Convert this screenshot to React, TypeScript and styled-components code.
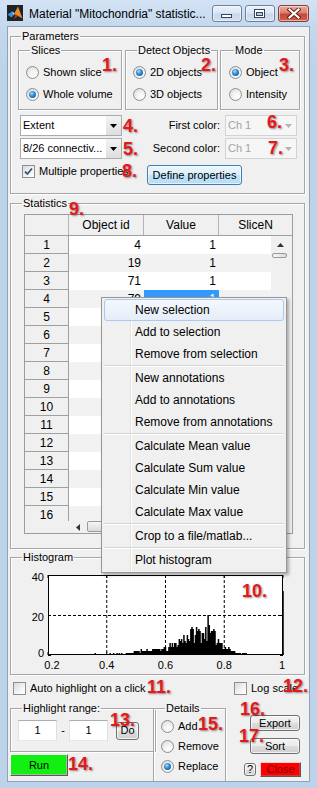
import React from "react";
import styled, { createGlobalStyle, css } from "styled-components";

const FONT = `"Liberation Sans", Arial, sans-serif`;

const GlobalStyle = createGlobalStyle`
  html, body { margin: 0; padding: 0; background: #bcd3ea; }
  *, *::before, *::after { box-sizing: border-box; }
  body { font-family: ${FONT}; font-size: 11px; color: #000; }
`;

/* ---------- window chrome ---------- */

const Win = styled.div`
  position: relative;
  width: 317px;
  height: 788px;
  overflow: hidden;
  display: flex;
  flex-direction: column;
  background: linear-gradient(#d3e3f4 0px, #c4d8ee 26px, #bcd3ea 70px, #bcd3ea 100%);
`;

const TitleBar = styled.header`
  flex: none;
  height: 26px;
  display: flex;
  align-items: flex-start;
  padding: 0 8px 0 7px;
`;

const AppIcon = styled.svg`
  flex: none;
  margin-top: 5px;
`;

const Title = styled.div`
  margin: 6px 0 0 6px;
  font: 12px/16px ${FONT};
  color: #000;
  white-space: nowrap;
`;

const CaptionGroup = styled.div`
  margin: 5px 0 0 auto;
  display: flex;
  gap: 3px;
`;

const CaptionBtn = styled.div<{ $w: number; $close?: boolean }>`
  width: ${(p) => p.$w}px;
  height: 17px;
  border-radius: 3px;
  display: flex;
  align-items: center;
  justify-content: center;
  border: 1px solid ${(p) => (p.$close ? "#8c3b33" : "#6c80a0")};
  background: ${(p) =>
    p.$close
      ? "linear-gradient(#e9aa9e 0%, #d98272 45%, #c4483a 55%, #d1604d 100%)"
      : "linear-gradient(#e9f0f9 0%, #dce6f3 45%, #c9d8eb 55%, #d3dff0 100%)"};
  box-shadow: inset 0 0 0 1px rgba(255, 255, 255, 0.5);
`;

const Client = styled.main`
  flex: none;
  height: 756px;
  margin: 0 7px;
  padding: 3px 4px 0 2px;
  background: #f0f0f0;
  border: 1px solid #8fa3bd;
  overflow: hidden;
  display: flex;
  flex-direction: column;
`;

/* ---------- panels ---------- */

const Panel = styled.fieldset<{ $p: string; $w: number; $h?: number; $mt?: number; $ml?: number }>`
  flex: none;
  min-width: 0;
  margin: ${(p) => p.$mt ?? 0}px 0 0 ${(p) => p.$ml ?? 0}px;
  padding: ${(p) => p.$p};
  width: ${(p) => p.$w}px;
  ${(p) =>
    p.$h !== undefined &&
    css`
      height: ${p.$h}px;
    `}
  border: 1px solid #a6a6a6;
  box-shadow: inset 1px 1px 0 #fff, 1px 1px 0 #fff;
`;

const Legend = styled.legend<{ $ml: number }>`
  margin-left: ${(p) => p.$ml}px;
  padding: 0 1px;
  height: 13px;
  font: 11px/13px ${FONT};
  white-space: nowrap;
`;

const GroupRow = styled.div`
  display: flex;
  align-items: flex-start;
`;

/* ---------- small controls ---------- */

const ChoiceRow = styled.label<{ $h: number }>`
  display: flex;
  align-items: center;
  gap: 4px;
  height: ${(p) => p.$h}px;
  white-space: nowrap;
  font: 11px/13px ${FONT};
`;

const RadioMark = styled.span<{ $on?: boolean }>`
  position: relative;
  flex: none;
  width: 13px;
  height: 13px;
  border-radius: 50%;
  border: 1px solid #8e8f8f;
  background: radial-gradient(circle at 65% 70%, #ffffff 0%, #f1f1f1 45%, #d2d2d2 100%);
  ${(p) =>
    p.$on &&
    css`
      &::after {
        content: "";
        position: absolute;
        left: 2px;
        top: 2px;
        width: 7px;
        height: 7px;
        border-radius: 50%;
        background: radial-gradient(circle at 40% 35%, #a6dcfc 0%, #2b88d4 45%, #0a4a8c 100%);
      }
    `}
`;

const CheckMark = styled.span`
  flex: none;
  width: 13px;
  height: 13px;
  border: 1px solid #8e8f8f;
  background: linear-gradient(135deg, #d9d9d9 0%, #f4f4f4 60%, #ffffff 100%);
  display: flex;
  align-items: center;
  justify-content: center;
`;

function Radio({ label, on, h = 22 }: { label: string; on?: boolean; h?: number }) {
  return (
    <ChoiceRow $h={h}>
      <RadioMark $on={on} />
      <span>{label}</span>
    </ChoiceRow>
  );
}

function Check({ label, on, h = 14 }: { label: string; on?: boolean; h?: number }) {
  return (
    <ChoiceRow $h={h}>
      <CheckMark>
        {on && (
          <svg width="9" height="9" viewBox="0 0 9 9">
            <path d="M1 4.6 L3.4 7 L8 1.5" fill="none" stroke="#3a5380" strokeWidth="1.8" />
          </svg>
        )}
      </CheckMark>
      <span>{label}</span>
    </ChoiceRow>
  );
}

const Select = styled.div<{ $w: number; $disabled?: boolean }>`
  width: ${(p) => p.$w}px;
  height: 21px;
  display: flex;
  border: 1px solid ${(p) => (p.$disabled ? "#d3d3d3" : "#a9abb0")};
  background: ${(p) => (p.$disabled ? "#f6f6f6" : "#fff")};
  color: ${(p) => (p.$disabled ? "#a3a3a3" : "#000")};
`;

const SelectText = styled.span`
  flex: 1;
  padding-left: 2px;
  display: flex;
  align-items: center;
  white-space: nowrap;
  overflow: hidden;
  font: 11px/13px ${FONT};
`;

const SelectArrow = styled.span<{ $disabled?: boolean }>`
  flex: none;
  width: 15px;
  display: flex;
  align-items: center;
  justify-content: center;
  background: ${(p) => (p.$disabled ? "transparent" : "linear-gradient(#f3f3f3, #dedede)")};
`;

function Dropdown({ w, text, disabled }: { w: number; text: string; disabled?: boolean }) {
  return (
    <Select $w={w} $disabled={disabled}>
      <SelectText>{text}</SelectText>
      <SelectArrow $disabled={disabled}>
        <svg width="7" height="4" viewBox="0 0 7 4">
          <path d="M0 0 H7 L3.5 4 Z" fill={disabled ? "#b4b4b4" : "#000"} />
        </svg>
      </SelectArrow>
    </Select>
  );
}

const ControlGrid = styled.div<{ $mt: number }>`
  margin: ${(p) => p.$mt}px 0 0 2px;
  display: grid;
  grid-template-columns: 102px 103px 72px;
  align-items: center;
  height: 21px;
`;

const FieldLabel = styled.span`
  padding-right: 5px;
  text-align: right;
  white-space: nowrap;
  font: 11px/13px ${FONT};
`;

const CheckRow = styled.div`
  margin: 6px 0 0 2px;
  height: 20px;
  display: flex;
  align-items: flex-start;
`;

const CheckSlot = styled.div`
  width: 127px;
  margin-top: -1px;
  padding-left: 2px;
`;

type Tone = "std" | "hot" | "green" | "red";

const Button = styled.div<{ $w: number; $h: number; $tone?: Tone }>`
  flex: none;
  width: ${(p) => p.$w}px;
  height: ${(p) => p.$h}px;
  display: flex;
  align-items: center;
  justify-content: center;
  font: 11px/13px ${FONT};
  white-space: nowrap;
  ${(p) => {
    switch (p.$tone) {
      case "hot":
        return css`
          border: 1px solid #3c7fb1;
          border-radius: 3px;
          background: linear-gradient(#eaf6fd 0%, #d9effc 50%, #c3e4f9 51%, #b5dcf6 100%);
          box-shadow: inset 0 0 0 1px rgba(255, 255, 255, 0.6);
        `;
      case "green":
        return css`
          border: 1px solid;
          border-color: #f4fff4 #5a5a5a #5a5a5a #f4fff4;
          background: #12f012;
          box-shadow: inset -1px -1px 0 #9cbf9c;
        `;
      case "red":
        return css`
          border: 1px solid;
          border-color: #ffd0d0 #5a5a5a #5a5a5a #ffd0d0;
          background: #ff0000;
          color: #7a0000;
          box-shadow: inset -1px -1px 0 #c04040;
        `;
      default:
        return css`
          border: 1px solid #707070;
          border-radius: 3px;
          background: linear-gradient(#f3f3f3 0%, #ebebeb 50%, #dddddd 51%, #cfcfcf 100%);
          box-shadow: inset 0 0 0 1px rgba(255, 255, 255, 0.7);
        `;
    }
  }}
`;

/* ---------- table ---------- */

const TableBox = styled.div`
  width: 269px;
  height: 320px;
  border: 1px solid #9c9c9c;
  background: #f0f0f0;
  display: grid;
  grid-template-columns: 44px 202px 21px;
  grid-template-rows: 21px 285px 12px;
  overflow: hidden;
  font: 12px/14px ${FONT};
`;

const HeadRow = styled.div`
  grid-column: 1 / -1;
  display: flex;
  border-bottom: 1px solid #a0a0a0;
  background: #f0f0f0;
`;

const HeadCell = styled.div<{ $w: number; $last?: boolean }>`
  flex: none;
  width: ${(p) => p.$w}px;
  display: flex;
  align-items: center;
  justify-content: center;
  border-right: ${(p) => (p.$last ? "none" : "1px solid #b4b4b4")};
  white-space: nowrap;
`;

const RowHeads = styled.div`
  grid-column: 1;
  grid-row: 2;
  overflow: hidden;
`;

const RowHead = styled.div`
  height: 18px;
  display: flex;
  align-items: center;
  justify-content: center;
  border-right: 1px solid #a0a0a0;
  border-bottom: 1px solid #a0a0a0;
`;

const DataView = styled.div`
  grid-column: 2;
  grid-row: 2;
  overflow: hidden;
  background: #fff;
`;

const DataRow = styled.div<{ $alt: boolean }>`
  display: flex;
  height: 18px;
  background: ${(p) => (p.$alt ? "#f2f2f2" : "#fff")};
`;

const DataCell = styled.div<{ $sel?: boolean }>`
  flex: none;
  width: 75px;
  padding-right: 3px;
  display: flex;
  align-items: center;
  justify-content: flex-end;
  ${(p) =>
    p.$sel &&
    css`
      background: #3399ff;
      color: #fff;
    `}
`;

const VScroll = styled.div`
  grid-column: 3;
  grid-row: 2;
  display: flex;
  flex-direction: column;
  background: #f0f0f0;
`;

const HScroll = styled.div`
  grid-column: 2;
  grid-row: 3;
  display: flex;
  align-items: flex-start;
  background: #f0f0f0;
`;

const ScrollArrow = styled.div<{ $w: number; $h: number }>`
  flex: none;
  width: ${(p) => p.$w}px;
  height: ${(p) => p.$h}px;
  display: flex;
  align-items: center;
  justify-content: center;
`;

const Thumb = styled.div<{ $w: number; $h: number; $vertical?: boolean }>`
  flex: none;
  margin-left: 1px;
  width: ${(p) => p.$w}px;
  height: ${(p) => p.$h}px;
  border: 1px solid #9a9a9a;
  border-radius: 2px;
  background: ${(p) =>
    p.$vertical ? "linear-gradient(to right, #f6f6f6, #dadada)" : "linear-gradient(#f6f6f6, #dadada)"};
`;

/* ---------- bottom area ---------- */

const OptionsRow = styled.div`
  flex: none;
  margin-top: 6px;
  padding-left: 3px;
  height: 14px;
  display: grid;
  grid-template-columns: 221px auto;
  align-items: center;
`;

const BottomArea = styled.div`
  flex: none;
  margin-top: 7px;
  display: flex;
  align-items: flex-start;
`;

const LeftCol = styled.div`
  flex: none;
  width: 146px;
  display: flex;
  flex-direction: column;
`;

const RangeRow = styled.div`
  display: flex;
  align-items: center;
  height: 21px;
`;

const Edit = styled.div`
  flex: none;
  width: 39px;
  height: 21px;
  background: #fff;
  border: 1px solid #abadb3;
  border-color: #abadb3 #dbdfe6 #e3e9ef #e2e3ea;
  display: flex;
  align-items: center;
  justify-content: center;
  font: 11px/13px ${FONT};
`;

const Dash = styled.span`
  flex: none;
  width: 12px;
  text-align: center;
  font: 11px/13px ${FONT};
`;

const RightCol = styled.div`
  flex: none;
  margin-left: 18px;
  width: 57px;
  display: flex;
  flex-direction: column;
  align-items: flex-start;
`;

const Slot = styled.div<{ $mt: number; $ml: number }>`
  margin: ${(p) => p.$mt}px 0 0 ${(p) => p.$ml}px;
`;

const FooterRow = styled.div`
  margin-top: 8px;
  display: flex;
  align-items: center;
  gap: 4px;
`;

/* ---------- context menu ---------- */

const Menu = styled.nav`
  position: absolute;
  left: 101px;
  top: 297px;
  width: 186px;
  padding: 1px 2px;
  border: 1px solid #979797;
  background: linear-gradient(
      to right,
      transparent 28px,
      #e2e3e3 28px,
      #e2e3e3 29px,
      #ffffff 29px,
      #ffffff 30px,
      transparent 30px
    ),
    #f0f0f0;
  box-shadow: 2px 2px 3px rgba(0, 0, 0, 0.3);
  font: 12px/14px ${FONT};
  z-index: 5;
`;

const MenuItem = styled.div<{ $active?: boolean }>`
  height: 22px;
  display: flex;
  align-items: center;
  padding-left: 30px;
  white-space: nowrap;
  border: 1px solid transparent;
  border-radius: 3px;
  ${(p) =>
    p.$active &&
    css`
      border-color: #a9c9ee;
      background: linear-gradient(#f4f8fd, #e4edf9);
    `}
`;

const MenuSep = styled.div`
  height: 2px;
  border-top: 1px solid #d5d5d5;
  border-bottom: 1px solid #ffffff;
`;

/* ---------- annotations ---------- */

const Note = styled.span<{ $x: number; $y: number }>`
  position: absolute;
  left: ${(p) => p.$x}px;
  top: ${(p) => p.$y}px;
  font: bold 18px/18px ${FONT};
  color: #e3191c;
  text-shadow: 1px 1px 2px rgba(0, 0, 0, 0.45);
  white-space: nowrap;
  pointer-events: none;
  z-index: 6;
`;

/* ---------- histogram ---------- */

function mulberry32(seed: number) {
  let a = seed;
  return function () {
    a |= 0;
    a = (a + 0x6d2b79f5) | 0;
    let t = Math.imul(a ^ (a >>> 15), 1 | a);
    t = (t + Math.imul(t ^ (t >>> 7), 61 | t)) ^ t;
    return ((t ^ (t >>> 14)) >>> 0) / 4294967296;
  };
}

const PLOT = { x0: 37, x1: 272, y0: 11, y1: 91 };
const px = (v: number) => PLOT.x0 + ((v - 0.2) / 0.8) * (PLOT.x1 - PLOT.x0);
const py = (n: number) => PLOT.y1 - (n / 40) * (PLOT.y1 - PLOT.y0);

function buildBars(): string {
  const rnd = mulberry32(11);
  const step = (PLOT.x1 - PLOT.x0) / 0.8 / 255;
  const w = step + 0.35;
  const lonely = [92, 105, 108, 111, 113, 115];
  let d = "";
  for (let i = 52; i <= 255; i++) {
    const c = i / 255;
    const g = (m: number, s: number, a: number) => a * Math.exp(-((c - m) ** 2) / (2 * s * s));
    let v =
      (g(0.74, 0.05, 10.5) + g(0.67, 0.035, 4.5) + g(0.6, 0.04, 2.5) + g(0.52, 0.03, 2)) *
      (0.55 + 0.85 * rnd());
    if (c < 0.45) v = lonely.includes(i) ? 1 : 0;
    else if (c > 0.875) v = 0;
    else if (v < 1 && rnd() > 0.4) v = 1;
    let n = Math.round(v);
    if (i === 190) n = 20;
    if (i === 255) n = 32;
    if (n <= 0) continue;
    const x = px(c) - w / 2;
    d += `M${x.toFixed(2)} ${PLOT.y1}h${w.toFixed(2)}V${py(n).toFixed(2)}h${(-w).toFixed(2)}Z`;
  }
  return d;
}

const BARS = buildBars();

function Histogram() {
  const xt = [0.2, 0.4, 0.6, 0.8, 1];
  const yt = [0, 20, 40];
  return (
    <svg width="292" height="110" viewBox="0 0 292 110" style={{ display: "block" }}>
      <rect x={PLOT.x0} y={PLOT.y0} width={PLOT.x1 - PLOT.x0} height={PLOT.y1 - PLOT.y0} fill="#fff" />
      {[0.4, 0.6, 0.8].map((v) => (
        <line key={v} x1={px(v)} x2={px(v)} y1={PLOT.y0} y2={PLOT.y1} stroke="#000" strokeDasharray="3 2" />
      ))}
      <line x1={PLOT.x0} x2={PLOT.x1} y1={py(20) + 0.5} y2={py(20) + 0.5} stroke="#000" strokeDasharray="3 2" />
      <path d={BARS} fill="#000" />
      <rect
        x={PLOT.x0 + 0.5}
        y={PLOT.y0 + 0.5}
        width={PLOT.x1 - PLOT.x0 - 1}
        height={PLOT.y1 - PLOT.y0 - 1}
        fill="none"
        stroke="#000"
      />
      {xt.map((v) => (
        <g key={v}>
          <line x1={px(v)} x2={px(v)} y1={PLOT.y1} y2={PLOT.y1 - 3} stroke="#000" />
          <line x1={px(v)} x2={px(v)} y1={PLOT.y0} y2={PLOT.y0 + 3} stroke="#000" />
          <text
            x={v === 0.2 ? px(v) + 4 : v === 1 ? px(v) - 1 : px(v)}
            y={105}
            textAnchor="middle"
            fontFamily="Liberation Sans, Arial, sans-serif"
            fontSize="11"
          >
            {v === 1 ? "1" : v.toFixed(1)}
          </text>
        </g>
      ))}
      {yt.map((v) => (
        <g key={v}>
          <line x1={PLOT.x0} x2={PLOT.x0 + 3} y1={py(v) + 0.5} y2={py(v) + 0.5} stroke="#000" />
          <line x1={PLOT.x1 - 3} x2={PLOT.x1} y1={py(v) + 0.5} y2={py(v) + 0.5} stroke="#000" />
          <text
            x={33}
            y={v === 0 ? py(v) + 2 : py(v) + 6}
            textAnchor="end"
            fontFamily="Liberation Sans, Arial, sans-serif"
            fontSize="11"
          >
            {v}
          </text>
        </g>
      ))}
    </svg>
  );
}

/* ---------- data ---------- */

const ROWS: { id: number; value: number }[] = [
  { id: 4, value: 1 },
  { id: 19, value: 1 },
  { id: 71, value: 1 },
  { id: 79, value: 1 },
  { id: 84, value: 1 },
  { id: 96, value: 1 },
  { id: 102, value: 1 },
  { id: 117, value: 1 },
  { id: 123, value: 1 },
  { id: 140, value: 1 },
  { id: 152, value: 1 },
  { id: 166, value: 1 },
  { id: 171, value: 1 },
  { id: 185, value: 1 },
  { id: 198, value: 1 },
  { id: 204, value: 1 },
];

const MENU: (string | null)[] = [
  "New selection",
  "Add to selection",
  "Remove from selection",
  null,
  "New annotations",
  "Add to annotations",
  "Remove from annotations",
  null,
  "Calculate Mean value",
  "Calculate Sum value",
  "Calculate Min value",
  "Calculate Max value",
  null,
  "Crop to a file/matlab...",
  null,
  "Plot histogram",
];

const NOTES: [string, number, number][] = [
  ["1.", 102, 56],
  ["2.", 201, 56],
  ["3.", 279, 56],
  ["4.", 123, 117],
  ["5.", 123, 140],
  ["6.", 267, 113],
  ["7.", 268, 139],
  ["8.", 122, 162],
  ["9.", 69, 200],
  ["10.", 242, 582],
  ["11.", 147, 678],
  ["12.", 283, 677],
  ["13.", 110, 711],
  ["14.", 68, 755],
  ["15.", 198, 715],
  ["16.", 240, 700],
  ["17.", 239, 727],
];

/* ---------- app ---------- */

export default function App() {
  return (
    <>
      <GlobalStyle />
      <Win>
        <TitleBar>
          <AppIcon width="16" height="16" viewBox="0 0 16 16">
            <rect width="16" height="16" fill="#1d232b" />
            <path d="M0.5 9.5 L5 6.5 L8 8.5 L4.5 12.5 Z" fill="#3a8fd4" />
            <path d="M5 6.5 L8 8.5 L6.5 10 Z" fill="#9fd3f5" />
            <path d="M7 9 L11 1.5 L15.5 13.5 L11 11 Z" fill="#f08a24" />
            <path d="M8.5 9.5 L11 11 L7 14 Z" fill="#b8341a" />
          </AppIcon>
          <Title>{'Material "Mitochondria" statistic...'}</Title>
          <CaptionGroup>
            <CaptionBtn $w={30}>
              <svg width="12" height="12" viewBox="0 0 12 12">
                <rect x="0.5" y="6.5" width="10" height="3" fill="#fff" stroke="#34445c" />
              </svg>
            </CaptionBtn>
            <CaptionBtn $w={30}>
              <svg width="12" height="10" viewBox="0 0 12 10">
                <rect x="0.5" y="0.5" width="10" height="8" fill="#fff" stroke="#34445c" />
                <rect x="2.5" y="3.5" width="6" height="3" fill="#b9c9dd" stroke="#34445c" />
              </svg>
            </CaptionBtn>
            <CaptionBtn $w={31} $close>
              <svg width="14" height="11" viewBox="0 0 14 11">
                <path d="M2.5 1.5 L11.5 9.5 M11.5 1.5 L2.5 9.5" stroke="#5b1c14" strokeWidth="4" strokeLinecap="square" />
                <path d="M2.5 1.5 L11.5 9.5 M11.5 1.5 L2.5 9.5" stroke="#ffffff" strokeWidth="2.2" strokeLinecap="square" />
              </svg>
            </CaptionBtn>
          </CaptionGroup>
        </TitleBar>

        <Client>
          <Panel $p="1px 3px 8px 7px" $w={295}>
            <Legend $ml={3}>Parameters</Legend>
            <GroupRow>
              <Panel $p="4px 0 4px 7px" $w={104}>
                <Legend $ml={4}>Slices</Legend>
                <Radio label="Shown slice" />
                <Radio label="Whole volume" on />
              </Panel>
              <Panel $p="4px 0 4px 7px" $w={93} $ml={3}>
                <Legend $ml={4}>Detect Objects</Legend>
                <Radio label="2D objects" on />
                <Radio label="3D objects" />
              </Panel>
              <Panel $p="4px 0 4px 8px" $w={80} $ml={2}>
                <Legend $ml={5}>Mode</Legend>
                <Radio label="Object" on />
                <Radio label="Intensity" />
              </Panel>
            </GroupRow>
            <ControlGrid $mt={5}>
              <Dropdown w={102} text="Extent" />
              <FieldLabel>First color:</FieldLabel>
              <Dropdown w={72} text="Ch 1" disabled />
            </ControlGrid>
            <ControlGrid $mt={2}>
              <Dropdown w={102} text="8/26 connectiv..." />
              <FieldLabel>Second color:</FieldLabel>
              <Dropdown w={72} text="Ch 1" disabled />
            </ControlGrid>
            <CheckRow>
              <CheckSlot>
                <Check label="Multiple properties" on />
              </CheckSlot>
              <Button $w={95} $h={20} $tone="hot">
                Define properties
              </Button>
            </CheckRow>
          </Panel>

          <Panel $p="4px 0 14px 13px" $w={295} $mt={3}>
            <Legend $ml={-2}>Statistics</Legend>
            <TableBox>
              <HeadRow>
                <HeadCell $w={44} />
                <HeadCell $w={75}>Object id</HeadCell>
                <HeadCell $w={75}>Value</HeadCell>
                <HeadCell $w={73} $last>
                  SliceN
                </HeadCell>
              </HeadRow>
              <RowHeads>
                {ROWS.map((_, i) => (
                  <RowHead key={i}>{i + 1}</RowHead>
                ))}
              </RowHeads>
              <DataView>
                {ROWS.map((r, i) => (
                  <DataRow key={i} $alt={i % 2 === 1}>
                    <DataCell>{r.id}</DataCell>
                    <DataCell $sel={i === 3}>{r.value}</DataCell>
                    <DataCell />
                  </DataRow>
                ))}
              </DataView>
              <VScroll>
                <ScrollArrow $w={19} $h={17}>
                  <svg width="7" height="4" viewBox="0 0 7 4">
                    <path d="M0 4 H7 L3.5 0 Z" fill="#333" />
                  </svg>
                </ScrollArrow>
                <Thumb $w={15} $h={5} $vertical />
              </VScroll>
              <HScroll>
                <ScrollArrow $w={17} $h={12}>
                  <svg width="4" height="7" viewBox="0 0 4 7">
                    <path d="M4 0 V7 L0 3.5 Z" fill="#333" />
                  </svg>
                </ScrollArrow>
                <Thumb $w={60} $h={11} />
              </HScroll>
            </TableBox>
          </Panel>

          <Panel $p="0" $w={295} $mt={2}>
            <Legend $ml={11}>Histogram</Legend>
            <Histogram />
          </Panel>

          <OptionsRow>
            <Check label="Auto highlight on a click" />
            <Check label="Log scale" />
          </OptionsRow>

          <BottomArea>
            <LeftCol>
              <Panel $p="5px 0 10px 7px" $w={146}>
                <Legend $ml={4}>Highlight range:</Legend>
                <RangeRow>
                  <Edit>1</Edit>
                  <Dash>-</Dash>
                  <Edit>1</Edit>
                  <Slot $mt={0} $ml={8}>
                    <Button $w={23} $h={18}>
                      Do
                    </Button>
                  </Slot>
                </RangeRow>
              </Panel>
              <Slot $mt={2} $ml={0}>
                <Button $w={58} $h={22} $tone="green">
                  Run
                </Button>
              </Slot>
            </LeftCol>

            <Panel $p="1px 0 0 7px" $w={73} $h={100} $ml={-3}>
              <Legend $ml={4}>Details</Legend>
              <Radio label="Add" h={20} />
              <Radio label="Remove" h={20} />
              <Radio label="Replace" on h={20} />
            </Panel>

            <RightCol>
              <Slot $mt={13} $ml={6}>
                <Button $w={50} $h={16}>
                  Export
                </Button>
              </Slot>
              <Slot $mt={7} $ml={6}>
                <Button $w={50} $h={16}>
                  Sort
                </Button>
              </Slot>
              <FooterRow>
                <Button $w={12} $h={13}>
                  ?
                </Button>
                <Button $w={41} $h={15} $tone="red">
                  Close
                </Button>
              </FooterRow>
            </RightCol>
          </BottomArea>
        </Client>

        <Menu>
          {MENU.map((m, i) =>
            m === null ? <MenuSep key={i} /> : <MenuItem key={i} $active={i === 0}>{m}</MenuItem>
          )}
        </Menu>

        {NOTES.map(([t, x, y]) => (
          <Note key={t} $x={x} $y={y}>
            {t}
          </Note>
        ))}
      </Win>
    </>
  );
}
